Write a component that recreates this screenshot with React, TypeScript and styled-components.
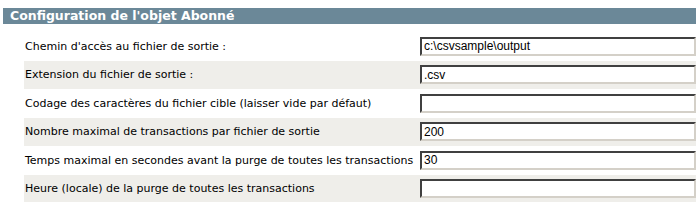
import styled, { createGlobalStyle } from "styled-components";

type Field = { label: string; value: string };

const FIELDS: Field[] = [
  { label: "Chemin d'accès au fichier de sortie :", value: "c:\\csvsample\\output" },
  { label: "Extension du fichier de sortie :", value: ".csv" },
  { label: "Codage des caractères du fichier cible (laisser vide par défaut)", value: "" },
  { label: "Nombre maximal de transactions par fichier de sortie", value: "200" },
  { label: "Temps maximal en secondes avant la purge de toutes les transactions", value: "30" },
  { label: "Heure (locale) de la purge de toutes les transactions", value: "" },
];

const Global = createGlobalStyle`
  html, body {
    margin: 0;
    background: #ffffff;
  }
`;

const Page = styled.div`
  padding: 8px 4px 0 3px;
  width: 700px;
  box-sizing: border-box;
`;

const Header = styled.div`
  background: #6b8898;
  color: #ffffff;
  font-family: "DejaVu Sans", Verdana, sans-serif;
  font-weight: bold;
  font-size: 12.5px;
  height: 16px;
  line-height: 16px;
  padding-left: 7px;
`;

const Rows = styled.div`
  display: grid;
  margin: 8px 0 0 21px;
`;

const Row = styled.div<{ $shaded: boolean }>`
  display: grid;
  grid-template-columns: 394px 1fr;
  align-items: center;
  height: 28.5px;
  background: ${(p) => (p.$shaded ? "#efeeea" : "#ffffff")};
`;

const Label = styled.div`
  font-family: "DejaVu Sans", Tahoma, sans-serif;
  font-size: 11px;
  color: #000000;
  padding-left: 1px;
  white-space: nowrap;
`;

const Input = styled.input`
  box-sizing: border-box;
  width: 276px;
  height: 19px;
  margin-left: 2px;
  padding: 0 2px;
  font-family: "Liberation Sans", Arial, sans-serif;
  font-size: 12px;
  color: #000000;
  background: #ffffff;
  border-style: solid;
  border-width: 2px;
  border-color: #404040 #d4d0c8 #d4d0c8 #404040;
  outline: none;
`;

export default function App() {
  return (
    <>
      <Global />
      <Page>
        <Header>Configuration de l'objet Abonné</Header>
        <Rows>
          {FIELDS.map((f, i) => (
            <Row key={f.label} $shaded={i % 2 === 1}>
              <Label>{f.label}</Label>
              <Input defaultValue={f.value} />
            </Row>
          ))}
        </Rows>
      </Page>
    </>
  );
}
